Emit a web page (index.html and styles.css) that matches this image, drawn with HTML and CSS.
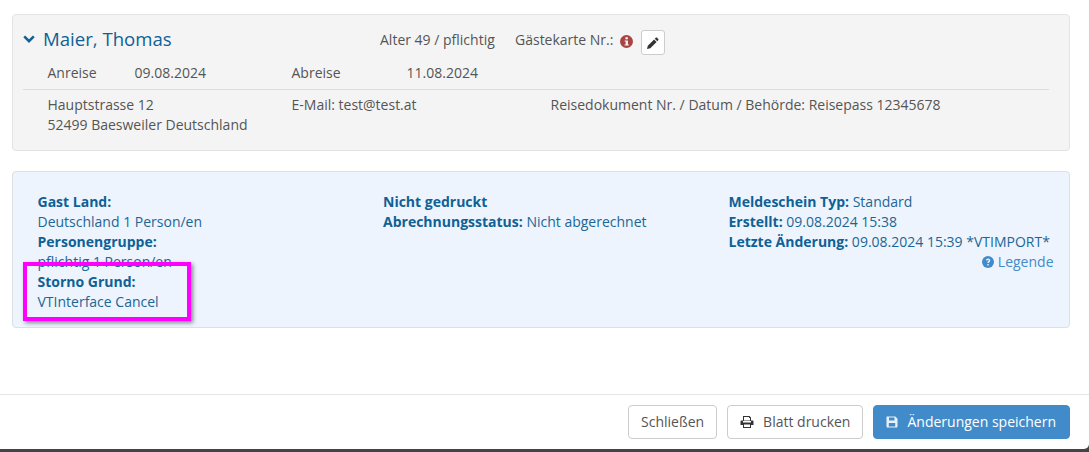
FILE: index.html
```html
<!DOCTYPE html>
<html lang="de">
<head>
<meta charset="utf-8">
<title>Meldeschein</title>
<link rel="stylesheet" href="styles.css">
</head>
<body>
<div class="modal">
  <div class="content">
    <section class="guest">
      <div class="guest-head">
        <h2 class="name">
          <svg class="chev" viewBox="0 0 12 8" width="12" height="8"><path d="M1.200 1.400 6 6.100l4.800-4.700" fill="none" stroke="#0f6195" stroke-width="2.600"/></svg>
          Maier, Thomas
        </h2>
        <span class="age">Alter 49 / pflichtig</span>
        <span class="card">Gästekarte Nr.:</span>
        <svg class="info" viewBox="0 0 12 12" width="13" height="13"><circle cx="6" cy="6" r="6" fill="#a94442"/><rect x="5" y="2" width="2.200" height="2" fill="#f4f4f4"/><path d="M4.300 5h3v3.800h.9v1H4.200v-1h1V6h-.9z" fill="#f4f4f4"/></svg>
        <button class="edit" type="button" aria-label="Bearbeiten">
          <svg viewBox="0 0 12 12" width="12" height="12"><path d="M0 12l.8-3.300 6.300-6.300 2.500 2.500-6.300 6.300zM7.800 1.700l.9-.9c.5-.5 1-.5 1.400 0l1.100 1.100c.5.4.5.9 0 1.400l-.9.900z" fill="#333"/></svg>
        </button>
      </div>
      <div class="dates">
        <span class="d-label">Anreise</span>
        <span class="d-value">09.08.2024</span>
        <span class="d-label2">Abreise</span>
        <span>11.08.2024</span>
      </div>
      <div class="address">
        <div class="addr">Hauptstrasse 12<br>52499 Baesweiler Deutschland</div>
        <div class="mail">E-Mail: test@test.at</div>
        <div>Reisedokument Nr. / Datum / Behörde: Reisepass 12345678</div>
      </div>
    </section>

    <section class="status">
      <div class="col col-a">
        <b>Gast Land:</b><br>
        Deutschland 1 Person/en<br>
        <b>Personengruppe:</b><br>
        pflichtig 1 Person/en<br>
        <b>Storno Grund:</b><br>
        VTInterface Cancel
      </div>
      <div class="col col-b">
        <b>Nicht gedruckt</b><br>
        <b>Abrechnungsstatus:</b> Nicht abgerechnet
      </div>
      <div class="col col-c">
        <b>Meldeschein Typ:</b> Standard<br>
        <b>Erstellt:</b> 09.08.2024 15:38<br>
        <b>Letzte Änderung:</b> 09.08.2024 15:39 *VTIMPORT*
        <div class="legend">
          <svg viewBox="0 0 12 12" width="12" height="12"><circle cx="6" cy="6" r="6" fill="#428bca"/><path d="M4 4.600c0-1.200.9-2 2.100-2s2.100.8 2.100 1.900c0 1.500-1.500 1.500-1.500 2.500H5.300c0-1.700 1.500-1.700 1.500-2.500 0-.4-.3-.7-.7-.7s-.7.300-.8.800zM5.300 7.900h1.400v1.500H5.300z" fill="#edf4fe"/></svg>
          Legende
        </div>
      </div>
      <div class="mark"></div>
    </section>
  </div>

  <footer class="footer">
    <button class="btn" type="button">Schließen</button>
    <button class="btn" type="button">
      <svg viewBox="0 0 14 12" width="14" height="12"><path d="M3 0h6.500L11 1.500V5H3zM4 1v3.500h6V2H9V1zM0.500 5.500C.5 5 1 4.500 1.500 4.500H3V6.500h8V4.500h1.500c.5 0 1 .5 1 1V9H11v3H3V9H.5zM4 8.500V11h6V8.500z" fill="#333" fill-rule="evenodd"/></svg>
      <span class="btn-text">Blatt drucken</span>
    </button>
    <button class="btn primary" type="button">
      <svg viewBox="0 0 12 12" width="12" height="12"><path d="M1 .5h8.300L11.500 2.700V10.500c0 .5-.4 1-1 1H1.500c-.6 0-1-.5-1-1V1c0-.3.2-.5.500-.5zM3 1.500V4.500h5.500V1.500zM2.800 7v3.500h6.400V7z" fill="#e8f1f9" fill-rule="evenodd"/></svg>
      <span class="btn-text">Änderungen speichern</span>
    </button>
  </footer>
</div>
</body>
</html>
```
FILE: styles.css
```css
* { box-sizing: border-box; }
html, body { margin: 0; padding: 0; }
body {
  width: 1089px;
  height: 452px;
  overflow: hidden;
  background: #444;
  font-family: "Open Sans", sans-serif;
  font-size: 14px;
  line-height: 20px;
  color: #555;
}
.modal {
  height: 449px;
  background: #fff;
  border-radius: 0 0 5px 0;
  display: flex;
  flex-direction: column;
}
.content {
  box-sizing: content-box;
  height: 380px;
  padding: 14px 19px 0 12px;
  border-bottom: 1px solid #e5e5e5;
}
.guest {
  height: 137px;
  background: #f4f4f4;
  border: 1px solid #e3e3e3;
  border-radius: 4px;
  padding: 0 20px 0 10px;
}
.guest-head {
  display: flex;
  align-items: center;
  height: 50px;
}
.name {
  margin: 0 0 2px;
  width: 357px;
  display: flex;
  align-items: center;
  gap: 8px;
  font-size: 18.600px;
  font-weight: 400;
  color: #0f6195;
}
.age { width: 135px; }
.card { margin-right: 7px; }
.info { margin: 2px 8px 0 0; }
.edit {
  width: 24px;
  height: 25px;
  margin-top: 5px;
  padding: 0;
  display: flex;
  align-items: center;
  justify-content: center;
  background: #fff;
  border: 1px solid #ccc;
  border-radius: 3px;
}
.dates {
  display: flex;
  height: 27px;
  margin-top: -2px;
  padding: 0 0 0 24.500px;
  border-bottom: 1px solid #ddd;
}
.d-label { width: 87px; }
.d-value { width: 157px; }
.d-label2 { width: 115px; }
.address {
  display: flex;
  padding: 5px 0 0 24.500px;
}
.addr { width: 244px; }
.mail { width: 259px; }
.status {
  position: relative;
  display: flex;
  height: 157px;
  margin-top: 20px;
  padding: 20px 15.500px 0 24.500px;
  background: #edf4fe;
  border: 1px solid #dcdfe3;
  border-radius: 4px;
  color: #1c6694;
}
.status b { font-weight: 700; color: #0f6195; }
.col-a { width: 345.500px; }
.col-b { width: 345.500px; }
.col-c { flex: 1; }
.legend {
  display: flex;
  align-items: center;
  justify-content: flex-end;
  gap: 4px;
  color: #428bca;
}
.mark {
  position: absolute;
  left: 10px;
  top: 90px;
  width: 168px;
  height: 59px;
  border: 4px solid #ff00ff;
  box-shadow: 2px 2px 4px rgba(0, 0, 0, .45);
}
.footer {
  display: flex;
  justify-content: flex-end;
  gap: 10px;
  padding: 10px 19px 0 0;
}
.btn {
  height: 34px;
  padding: 0 12px;
  display: flex;
  align-items: center;
  font: inherit;
  color: #555;
  background: #fff;
  border: 1px solid #ccc;
  border-radius: 4px;
}
.btn-text { margin-left: 9px; }
.primary {
  padding-right: 13px;
  background: #428bca;
  border-color: #428bca;
  color: #fff;
}
```
